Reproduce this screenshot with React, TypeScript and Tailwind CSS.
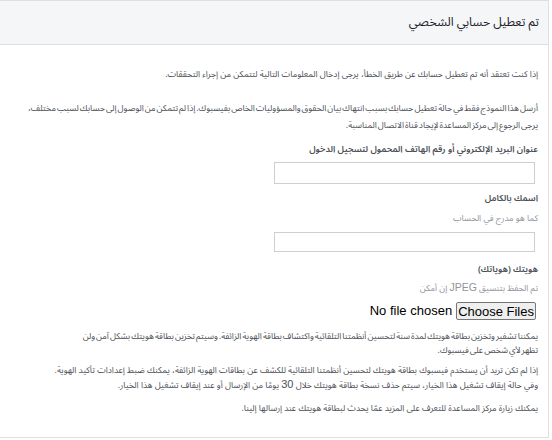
export default function App() {
  return (
    <div dir="rtl" className="w-[552px] h-[440px] bg-white pr-[3px] overflow-hidden" style={{ fontFamily: '"Noto Sans Arabic", "DejaVu Sans", "Liberation Sans", sans-serif' }}>
      <div className="h-[438px] border-t border-b border-r border-[#dddfe2] bg-white">
        {/* Header */}
        <div className="h-[44px] bg-[#f5f6f7] border-b border-[#dddfe2] flex items-center pr-[9px]">
          <h2 className="text-[12.2px] text-[#1d2129] leading-none">تم تعطيل حسابي الشخصي</h2>
        </div>

        {/* Body */}
        <div className="pr-[10px] pl-[6px] pt-[21px] text-[8.6px] text-[#4b4f56] leading-[16px]">
          <p>إذا كنت تعتقد أنه تم تعطيل حسابك عن طريق الخطأ، يرجى إدخال المعلومات التالية لتتمكن من إجراء التحققات.</p>

          <p className="mt-[18px] leading-[17px] [word-spacing:-1.2px]">
            أرسل هذا النموذج فقط في حالة تعطيل حسابك بسبب انتهاك بيان الحقوق والمسؤوليات الخاص بفيسبوك. إذا لم تتمكن من الوصول إلى حسابك لسبب مختلف،
            <br />
            يرجى الرجوع إلى مركز المساعدة لإيجاد قناة الاتصال المناسبة.
          </p>

          <label className="block mt-[8px] text-[8.9px] font-semibold">عنوان البريد الإلكتروني أو رقم الهاتف المحمول لتسجيل الدخول</label>
          <input type="text" className="block mt-[4px] mr-[3px] w-[261px] h-[22px] border border-[#ccd0d5] bg-white" />

          <label className="block mt-[7px] text-[8.9px] font-semibold">اسمك بالكامل</label>
          <div className="mt-[3px] text-[#90949c]">كما هو مدرج في الحساب</div>
          <input type="text" className="block mt-[6px] mr-[3px] w-[261px] h-[20px] border border-[#ccd0d5] bg-white" />

          <label className="block mt-[10px] text-[8.9px] font-semibold">هويتك (هوياتك)</label>
          <div className="mt-[2px] text-[#90949c]">
            تم الحفظ بتنسيق <span className="text-[10.5px] leading-none" style={{ fontFamily: '"Liberation Sans", Arial, sans-serif' }}>JPEG</span> إن أمكن
          </div>
          <div className="mt-[6px] mr-[2px] flex items-center gap-[4px] text-[13px] text-black" style={{ fontFamily: '"Liberation Sans", Arial, sans-serif' }}>
            <button type="button" className="h-[18px] px-[1px] border border-[#767676] rounded-[2px] bg-[#efefef] leading-none">Choose Files</button>
            <span dir="ltr">No file chosen</span>
          </div>

          <p className="mt-[9px] leading-[14px] [word-spacing:-1.2px]">
            يمكننا تشفير وتخزين بطاقة هويتك لمدة سنة لتحسين أنظمتنا التلقائية واكتشاف بطاقة الهوية الزائفة. وسيتم تخزين بطاقة هويتك بشكل آمن ولن
            <br />
            تظهر لأي شخص على فيسبوك.
          </p>

          <p className="mt-[6px] leading-[15px]">
            إذا لم تكن تريد أن يستخدم فيسبوك بطاقة هويتك لتحسين أنظمتنا التلقائية للكشف عن بطاقات الهوية الزائفة، يمكنك ضبط إعدادات تأكيد الهوية.
            <br />
            وفي حالة إيقاف تشغيل هذا الخيار، سيتم حذف نسخة بطاقة هويتك خلال <span className="text-[11px] leading-none" style={{ fontFamily: '"Liberation Sans", Arial, sans-serif' }}>30</span> يومًا من الإرسال أو عند إيقاف تشغيل هذا الخيار.
          </p>

          <p className="mt-[8px] leading-[15px]">
            يمكنك زيارة مركز المساعدة للتعرف على المزيد عمّا يحدث لبطاقة هويتك عند إرسالها إلينا.
          </p>
        </div>
      </div>
    </div>
  );
}
